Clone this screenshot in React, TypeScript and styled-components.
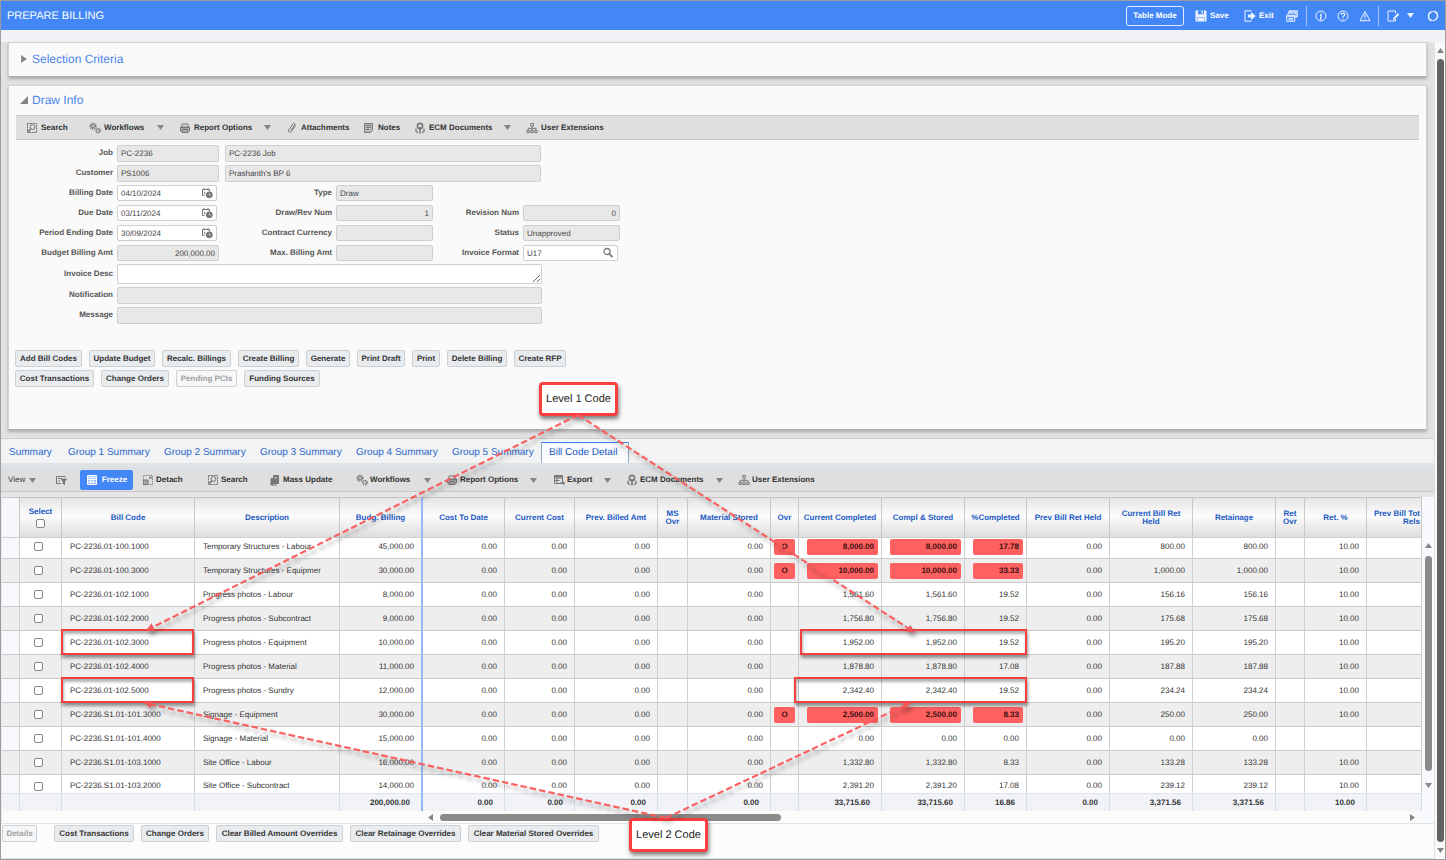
import React from 'react';
import styled, { createGlobalStyle, css } from 'styled-components';

const GlobalStyle = createGlobalStyle`
  *, *::before, *::after { box-sizing: border-box; }
  html, body { margin: 0; padding: 0; }
  body, button, input, textarea {
    font-family: "Liberation Sans", Arial, sans-serif;
    font-size: 8px;
    line-height: 10px;
    color: #333;
    text-rendering: geometricPrecision;
  }
  button { border: 0; margin: 0; padding: 0; background: none; cursor: pointer; }
`;

const Frame = styled.div`
  position: relative;
  display: flex;
  flex-direction: column;
  min-height: 100vh;
  border: 1px solid #9c9c9c;
  background: #fcfcfc;
  overflow: hidden;
`;

/* ---------- page header ---------- */

const Header = styled.header`
  display: flex;
  align-items: center;
  justify-content: space-between;
  height: 29px;
  padding: 0 6px;
  background: #4287f5;
  color: #fff;
`;

const PageTitle = styled.h1`
  margin: 0;
  font-size: 11px;
  line-height: 14px;
  font-weight: 400;
`;

const HeaderTools = styled.nav`
  display: grid;
  grid-template-columns: 69px 49px 42px 20px 9px 22px 22px 19px 9px 20px 20px 12px;
  align-items: center;
`;

const HeaderButton = styled.button`
  display: flex;
  align-items: center;
  justify-self: start;
  gap: 3px;
  color: #fff;
  font-weight: 700;
  svg { opacity: 0.9; }
`;

const OutlineButton = styled(HeaderButton)`
  justify-content: center;
  width: 58px;
  height: 20px;
  border: 1px solid #dfeaff;
  border-radius: 3px;
`;

const HeaderRule = styled.span`
  width: 1px;
  height: 20px;
  background: #a9c8fb;
`;

const SubHeader = styled.div`
  height: 12px;
  background: #f0f2f5;
`;

const Body = styled.div`
  display: flex;
  flex: 1;
`;

const Main = styled.main`
  display: flex;
  flex-direction: column;
  flex: 1;
  min-width: 0;
  border-right: 1px solid #dde3ea;
`;

/* ---------- upper panels ---------- */

const Upper = styled.div`
  display: flex;
  flex-direction: column;
  gap: 8px;
  padding: 0 7px 8px;
  background: #e2e2e2;
`;

const Panel = styled.section`
  background: #fafafa;
  border: 1px solid #d2d2d2;
  border-bottom-color: #b0b0b0;
  box-shadow: 0 2px 3px #aaa;
`;

const PanelTitle = styled.h2<{ $height: number }>`
  display: flex;
  align-items: center;
  gap: 4px;
  height: ${(p) => p.$height}px;
  margin: 0;
  padding: 0 0 2px 11px;
  font-size: 12px;
  line-height: 16px;
  font-weight: 400;
  color: #4b86ea;
`;

const Toolbar = styled.div<{ $inset?: boolean }>`
  display: flex;
  align-items: center;
  height: 25px;
  border-top: 1px solid #cbcbcb;
  border-bottom: 1px solid #c6c6c6;
  background: #dfdfdf;
  ${(p) => p.$inset && css`
    margin: 0 7px;
    padding-left: 10px;
    button { gap: 3px; }
  `}
`;

const LowerToolbar = styled(Toolbar)`
  height: 24px;
  padding-left: 7px;
  border-top-color: #d5dcf0;
`;

const ToolButton = styled.button<{ $width: number; $plain?: boolean }>`
  display: flex;
  align-items: center;
  gap: 2px;
  flex: none;
  width: ${(p) => p.$width}px;
  height: 20px;
  color: #333;
  font-weight: ${(p) => (p.$plain ? 400 : 700)};
  text-align: left;
  white-space: nowrap;
`;

const FreezeButton = styled.button`
  display: flex;
  align-items: center;
  justify-content: center;
  gap: 4px;
  flex: none;
  width: 53px;
  height: 20px;
  margin-right: 9px;
  border-radius: 2px;
  background: #4287f5;
  color: #fff;
  font-weight: 700;
`;

const CaretSlot = styled.span<{ $width: number }>`
  display: flex;
  width: ${(p) => p.$width}px;
`;

const Form = styled.form`
  display: flex;
  flex-direction: column;
  margin: 3px 7px 0;
`;

const FormRow = styled.div<{ $tall?: boolean; $area?: boolean }>`
  display: flex;
  align-items: center;
  height: ${(p) => (p.$area ? 22 : 20)}px;
  input { height: ${(p) => (p.$tall ? 17 : 16)}px; }
`;

const Label = styled.label<{ $width: number }>`
  flex: none;
  width: ${(p) => p.$width}px;
  padding-right: 4px;
  text-align: right;
  font-weight: 700;
  color: #555;
`;

const fieldLook = css`
  border: 1px solid #cfcfcf;
  border-radius: 2px;
  background: #fff;
  color: #444;
  outline: none;
`;

const Input = styled.input<{ $width: number; $end?: boolean }>`
  ${fieldLook}
  flex: none;
  width: ${(p) => p.$width}px;
  padding: 0 3px;
  text-align: ${(p) => (p.$end ? 'right' : 'left')};
  &:read-only { background: #e8e8e8; }
`;

const WideInput = styled(Input)`
  margin-left: 6px;
`;

const Area = styled.textarea`
  ${fieldLook}
  width: 425px;
  height: 20px;
  resize: vertical;
`;

const FieldWithIcon = styled.span<{ $width: number }>`
  ${fieldLook}
  display: flex;
  align-items: center;
  flex: none;
  width: ${(p) => p.$width}px;
  height: 16px;
  padding-right: 3px;
  input { flex: 1; min-width: 0; height: 14px; border: 0; }
`;

const Spacer = styled.span<{ $width: number }>`
  flex: none;
  width: ${(p) => p.$width}px;
`;

const ButtonRow = styled.div`
  display: flex;
  gap: 7px;
  margin-bottom: 3px;
`;

const Actions = styled.div`
  padding: 25px 6px 39px;
`;

const ActionButton = styled.button<{ $width: number }>`
  flex: none;
  width: ${(p) => p.$width}px;
  height: 17px;
  border: 1px solid #cdd1d4;
  border-radius: 2px;
  background: #e9ecef;
  color: #333;
  font-weight: 700;
  white-space: nowrap;
  &:disabled { background: #f6f7f8; color: #a0a0a0; cursor: default; }
`;

/* ---------- lower pane ---------- */

const TabBar = styled.div`
  display: flex;
  align-items: flex-end;
  height: 25px;
  border-top: 1px solid #cfcfcf;
  background: #f1f3f5;
`;

const Tab = styled.button<{ $width: number; $active?: boolean }>`
  flex: none;
  width: ${(p) => p.$width}px;
  height: 21px;
  padding-left: 8px;
  text-align: left;
  font-size: 10px;
  line-height: 12px;
  color: #2a66cc;
  white-space: nowrap;
  ${(p) =>
    p.$active &&
    css`
      padding-left: 7px;
      border: 1px solid #8fa9c4;
      border-top: 1px solid #4287f5;
      border-bottom: 0;
      background: #fafbfc;
      color: #1554c4;
    `}
`;

const TabStrip = styled.div`
  height: 5px;
  background: #dfe3e4;
`;

const GridArea = styled.div`
  display: flex;
  margin: 5px 0 0 1px;
  border-bottom: 1px solid #dde3ea;
`;

const GridColumn = styled.div`
  flex: 1;
  min-width: 0;
`;

const LowerPane = styled.div`
  background: #e6e6e6;
`;

const Grid = styled.table`
  width: 100%;
  table-layout: fixed;
  border-collapse: separate;
  border-spacing: 0;
  background: #fff;
`;

const HeadCell = styled.th<{ $freeze?: boolean; $blank?: boolean }>`
  height: 41px;
  padding: 0;
  overflow: hidden;
  border-top: 1px solid #c4c4c4;
  border-bottom: 1px solid #cfcfcf;
  border-right: ${(p) => (p.$freeze ? '2px solid #94b8f6' : '1px solid #c8c8c8')};
  background: ${(p) => (p.$blank ? '#f5f7fc' : 'linear-gradient(#e4e4e4, #fcfcfc 45%, #dedede)')};
  color: #2159c4;
  font-weight: 700;
  line-height: 8px;
  text-align: center;
`;

const HeadText = styled.span<{ $cut?: boolean }>`
  display: block;
  white-space: pre-line;
  ${(p) => p.$cut && css`padding-right: 1px; text-align: right;`}
`;

const HeadSelect = styled.label`
  display: flex;
  flex-direction: column;
  align-items: center;
  gap: 3px;
`;

const Check = styled.input`
  appearance: none;
  display: block;
  width: 9px;
  height: 9px;
  margin: 0;
  border: 1px solid #858585;
  border-radius: 2px;
  background: #fff;
`;

const Cell = styled.td<{ $freeze?: boolean; $end?: boolean }>`
  padding: 4px 7px 3px 8px;
  overflow: hidden;
  border-right: ${(p) => (p.$freeze ? '2px solid #94b8f6' : '1px solid #cfcfcf')};
  border-bottom: 1px solid #c9c9c9;
  line-height: 16px;
  text-align: ${(p) => (p.$end ? 'right' : 'left')};
  white-space: nowrap;
`;

const SelectCell = styled(Cell)`
  input { margin: 3px 6px 4px; }
`;

/* The first and last rows are cut by the edges of the scrolled area. */
const GridBody = styled.tbody`
  tr:nth-child(even) td { background: #eee; }
  tr:nth-child(odd) td:first-child { background: #f6f8fd; }
  tr:first-child td { padding-top: 1px; }
  tr:last-child td {
    padding-bottom: 0;
    border-bottom: 0;
    line-height: 14px;
  }
  tr:last-child input { margin-bottom: 2px; }
`;

const TotalCell = styled.td<{ $freeze?: boolean }>`
  height: 18px;
  padding: 0 11px 0 0;
  border-top: 1px solid #dfe4ea;
  border-right: ${(p) => (p.$freeze ? '2px solid #94b8f6' : '1px solid #d9dfe6')};
  background: #f1f3f8;
  font-weight: 700;
  text-align: right;
`;

const Flag = styled.span<{ $small?: boolean }>`
  display: block;
  margin: ${(p) => (p.$small ? '0 -4px 0 -5px' : '0 -4px 0 0')};
  padding-right: ${(p) => (p.$small ? 0 : 4)}px;
  border-radius: 2px;
  background: #ff6060;
  color: #3a1010;
  font-weight: 700;
  text-align: ${(p) => (p.$small ? 'center' : 'right')};
`;

const HorizontalBar = styled.div`
  display: flex;
  align-items: center;
  height: 12px;
  padding: 0 6px 0 425px;
  background: #fbfbfc;
`;

const HorizontalTrack = styled.div`
  flex: 1;
  margin: 0 21px 0 6px;
`;

const HorizontalThumb = styled.div`
  width: 36%;
  height: 7px;
  border-radius: 4px;
  background: #8a8a8a;
`;

const VerticalBar = styled.div<{ $grid?: boolean }>`
  display: flex;
  flex-direction: column;
  align-items: center;
  flex: none;
  width: ${(p) => (p.$grid ? 12 : 10)}px;
  padding: ${(p) => (p.$grid ? '45px 0 34px' : '5px 0')};
  background: ${(p) => (p.$grid ? '#f8f9fc' : '#f9f9f9')};
`;

const VerticalThumb = styled.div<{ $grid?: boolean }>`
  flex: 1;
  width: 7px;
  margin: ${(p) => (p.$grid ? '7px 0 11px' : '5px 0')};
  border-radius: 4px;
  background: ${(p) => (p.$grid ? '#8a8a8a' : '#626262')};
`;

const FooterButtons = styled.div`
  display: flex;
  gap: 7px;
  flex: 1;
  padding: 1px 0 0 1px;
  background: #fcfcfc;
  border-bottom: 1px solid #dde3ea;
`;

/* ---------- call-outs over the page ---------- */

const Overlay = styled.div`
  position: absolute;
  inset: 0;
  pointer-events: none;
`;

const Arrows = styled.svg`
  position: absolute;
  top: 0;
  left: 0;
  filter: drop-shadow(2px 4px 2px rgba(0, 0, 0, 0.35));
`;

const CallOut = styled.div<{ $x: number; $y: number }>`
  position: absolute;
  left: ${(p) => p.$x}px;
  top: ${(p) => p.$y}px;
  display: flex;
  align-items: center;
  justify-content: center;
  width: 79px;
  height: 34px;
  border: 3px solid #f94040;
  border-radius: 4px;
  background: #fff;
  box-shadow: 1px 3px 4px rgba(0, 0, 0, 0.5);
  color: #222;
  font-size: 11px;
  line-height: 14px;
  white-space: nowrap;
`;

const Marker = styled.div<{ $x: number; $y: number; $width: number }>`
  position: absolute;
  left: ${(p) => p.$x}px;
  top: ${(p) => p.$y}px;
  width: ${(p) => p.$width}px;
  height: 26px;
  border: 2px solid #f44040;
  box-shadow: 1px 3px 3px rgba(0, 0, 0, 0.4), inset 1px 3px 3px rgba(0, 0, 0, 0.3);
`;

/* ---------- icons ---------- */

const glyphs: Record<string, React.ReactNode> = {
  search: (
    <>
      <path d="M1.5 1.5h9v9h-9z" strokeDasharray="2 .6" />
      <circle cx="6.5" cy="5" r="2.4" />
      <path d="M4.8 6.8L2 10" strokeWidth="1.6" />
    </>
  ),
  gears: (
    <>
      <circle cx="4" cy="4.2" r="2.8" strokeDasharray="1.3 .7" strokeWidth="1.6" />
      <circle cx="4" cy="4.2" r="1.5" />
      <circle cx="9" cy="8.6" r="1.9" strokeDasharray="1.1 .5" strokeWidth="1.8" />
    </>
  ),
  printer: (
    <>
      <path d="M3 5V2h6v3M1.5 5h9v4h-9zM3 7.5h6v3H3z" />
      <path d="M2 5.8h8" strokeWidth="1.5" />
    </>
  ),
  clip: <path d="M9.5 3.5L5.3 9.6a1.5 1.5 0 01-2.5-1.7L7 1.8a1 1 0 011.8 1.1L5 8.4" />,
  notes: (
    <>
      <path d="M1.5 1.5h8v7l-2 2h-6z" fill="#bbb" />
      <path d="M3 3.5h5M3 5.5h5M3 7.5h3" />
    </>
  ),
  ecm: (
    <>
      <circle cx="6" cy="4" r="2.6" strokeWidth="1.6" />
      <path d="M6 5v6.500" strokeWidth="1.600" />
      <path d="M2 6.500v3l2 1.200M10 6.500v3l-2 1.200" strokeWidth="1.300" />
    </>
  ),
  org: (
    <>
      <path d="M4.8 1.5h2.6v2.6H4.8zM1 8.4h2.4v2.2H1zM4.9 8.4h2.4v2.2H4.9zM8.8 8.4h2.4v2.2H8.8z" />
      <path d="M6.1 4.2v4M2.2 8.2V6.3h7.8v1.9" />
    </>
  ),
  query: (
    <>
      <path d="M6 9.5H1.500V2.500h9M3 4.500h3M3 7h2" />
      <path d="M6 5h5.500L9.600 7.300V10.500L8 9.500V7.300z" fill="currentColor" />
    </>
  ),
  freeze: (
    <>
      <path d="M1.500 1.500h9v9h-9z" fill="#8fb7fa" />
      <path d="M2 3.300h8M4.300 3v7M7 3v7M2 5.500h8M2 8h8" />
    </>
  ),
  detach: (
    <>
      <path d="M1.500 1.500h9v9h-9z" strokeDasharray="1.400 1" />
      <path d="M1.500 6h4.500v4.500H1.500z" fill="#aaa" />
      <path d="M7 5l2-2M7.200 3h2v2" />
    </>
  ),
  mass: (
    <>
      <path d="M4.500 1.500h5v8h-5z" fill="currentColor" />
      <path d="M2 4.500h1.500v6.500H2zM3 11h5" fill="currentColor" />
      <path d="M5.500 3.500h1.500v1.500" stroke="#ddd" strokeWidth=".8" />
    </>
  ),
  exportTable: (
    <>
      <path d="M1.500 1.500h8v8h-8zM1.500 4h8M1.500 6.500h5M4 4v5.500" />
      <path d="M1.500 2.500h8" strokeWidth="1.600" />
      <path d="M7 8.500h3v-1.500l2 2.300-2 2.200v-1.500H7z" fill="currentColor" stroke="none" />
    </>
  ),
  calendar: (
    <>
      <path d="M1.500 8.500V2.500h7v1.500M3 .8v2.500M7 .8v2.500M1.500 8.500h2M3.700 4.800v2.500" />
      <circle cx="8.300" cy="7.800" r="3" fill="currentColor" />
      <path d="M8.300 6.300v1.700h1.400" stroke="#eee" strokeWidth=".7" />
    </>
  ),
  magnifier: (
    <>
      <circle cx="5" cy="4.500" r="3" strokeWidth="1.300" />
      <path d="M7.300 6.800l3.200 3.400" strokeWidth="1.700" />
    </>
  ),
  save: (
    <>
      <path d="M.5 .5h10l1 1v10H.5z" fill="currentColor" stroke="none" />
      <path d="M3 .5h6v3.800H3zM2.500 7h7v4h-7z" fill="#4287f5" stroke="none" />
      <path d="M6.500 1h1.500v2.500H6.500zM3 7.500h6v3.500H3z" fill="currentColor" stroke="none" />
    </>
  ),
  exit: (
    <>
      <path d="M7 1.500V.8H1v10.400h6v-.8" />
      <path d="M4 4.500h3V2l4.800 4L7 10V7.500H4z" fill="currentColor" stroke="none" />
    </>
  ),
  windows: (
    <>
      <path d="M3 3V.9h8.300v6H9.500M3 1.900h8" />
      <path d="M.7 5.300h8v6h-8zM.7 6.300h8M2.500 8.300h4.500M2.500 9.800h4.500" />
      <path d="M2 4.500V3h8v5" />
    </>
  ),
  info: (
    <>
      <circle cx="6" cy="6" r="5" />
      <path d="M6.300 5L5.600 9h1M5 5h1.300M6.500 2.700v1" strokeWidth="1.300" />
    </>
  ),
  help: (
    <>
      <circle cx="6" cy="6" r="5" />
      <path d="M4.300 4.800c0-2.200 3.400-2.200 3.400 0 0 1.200-1.700 1.200-1.700 2.400M6 8.200v1" strokeWidth="1.300" />
    </>
  ),
  warn: (
    <>
      <path d="M6 1.500l5 9.200H1z" />
      <path d="M6 4.500v3.300M6 8.600v1" strokeWidth="1.200" />
    </>
  ),
  edit: (
    <>
      <path d="M8.500 3.500V1H1v10h5.500M8.500 9v2H6" />
      <path d="M11.800 3.800L7 8.600" strokeWidth="2" />
      <path d="M6.800 7.600l1.400 1.400-2.400 1.200z" fill="currentColor" stroke="none" />
    </>
  ),
  refresh: (
    <>
      <path d="M3.200 9.700A4.600 4.600 0 014.500 1.700M8.800 2.300A4.600 4.600 0 017.500 10.300" strokeWidth="1.500" />
      <path d="M4.500 1.600A4.600 4.600 0 018.500 2M7.500 10.400a4.600 4.600 0 01-4-.4" strokeWidth="1" />
      <path d="M1 9.300h3.300v2.200zM11 2.700H7.700V.5z" fill="currentColor" stroke="none" />
    </>
  ),
};

const Svg = styled.svg`
  flex: none;
  display: block;
`;

function Icon({ name, color = '#777' }: { name: string; color?: string }) {
  return (
    <Svg width="12" height="12" viewBox="0 0 12 12" fill="none" stroke="currentColor" color={color} strokeWidth="1" aria-hidden="true">
      {glyphs[name]}
    </Svg>
  );
}

type Direction = 'down' | 'up' | 'left' | 'right' | 'corner';

const arrowShapes: Record<Direction, string> = {
  down: '0,1 7,1 3.5,6',
  up: '0,6 7,6 3.5,1',
  left: '6,0 6,7 1,3.5',
  right: '1,0 1,7 6,3.5',
  corner: '0,7 7,0 7,7',
};

function Arrow({ direction, color = '#858585', size = 7 }: { direction: Direction; color?: string; size?: number }) {
  return (
    <Svg width={size} height={size} viewBox="0 0 7 7" aria-hidden="true">
      <polygon points={arrowShapes[direction]} fill={color} />
    </Svg>
  );
}

/* ---------- data ---------- */

type Tool = { icon: string; text: string; width: number; caret?: number };

const upperTools: Tool[] = [
  { icon: 'search', text: 'Search', width: 63 },
  { icon: 'gears', text: 'Workflows', width: 68, caret: 22 },
  { icon: 'printer', text: 'Report Options', width: 85, caret: 22 },
  { icon: 'clip', text: 'Attachments', width: 77 },
  { icon: 'notes', text: 'Notes', width: 51 },
  { icon: 'ecm', text: 'ECM Documents', width: 90, caret: 22 },
  { icon: 'org', text: 'User Extensions', width: 90 },
];

const lowerTools: Tool[] = [
  { icon: 'detach', text: 'Detach', width: 65 },
  { icon: 'search', text: 'Search', width: 62 },
  { icon: 'mass', text: 'Mass Update', width: 87 },
  { icon: 'gears', text: 'Workflows', width: 68, caret: 22 },
  { icon: 'printer', text: 'Report Options', width: 84, caret: 23 },
  { icon: 'exportTable', text: 'Export', width: 51, caret: 22 },
  { icon: 'ecm', text: 'ECM Documents', width: 90, caret: 22 },
  { icon: 'org', text: 'User Extensions', width: 90 },
];

type Action = [text: string, width: number, disabled?: boolean];

const firstActions: Action[] = [
  ['Add Bill Codes', 67], ['Update Budget', 66], ['Recalc. Billings', 69], ['Create Billing', 61],
  ['Generate', 44], ['Print Draft', 48], ['Print', 28], ['Delete Billing', 60], ['Create RFP', 52],
];
const secondActions: Action[] = [
  ['Cost Transactions', 79], ['Change Orders', 68], ['Pending PCIs', 61, true], ['Funding Sources', 76],
];
const footerActions: Action[] = [
  ['Cost Transactions', 80], ['Change Orders', 68], ['Clear Billed Amount Overrides', 127],
  ['Clear Retainage Overrides', 111], ['Clear Material Stored Overrides', 131],
];

const tabs: [string, number][] = [
  ['Summary', 59], ['Group 1 Summary', 96], ['Group 2 Summary', 96], ['Group 3 Summary', 96],
  ['Group 4 Summary', 96], ['Group 5 Summary', 97], ['Bill Code Detail', 88],
];

const columnWidths = [18, 42, 133, 145, 83, 82, 70, 83, 30, 83, 28, 83, 83, 62, 83, 83, 83, 29, 62];

const headings = [
  'Bill Code', 'Description', 'Budg. Billing', 'Cost To Date', 'Current Cost', 'Prev. Billed Amt', 'MS\nOvr',
  'Material Stored', 'Ovr', 'Current Completed', 'Compl & Stored', '%Completed', 'Prev Bill Ret Held',
  'Current Bill Ret\nHeld', 'Retainage', 'Ret\nOvr', 'Ret. %', 'Prev Bill Tot\nRels',
];

type Row = {
  code: string; description: string; budget: string; completed: string;
  percent: string; retained: string; rate: string; override?: boolean;
};

const row = (
  code: string, description: string, budget: string, completed: string,
  percent: string, retained: string, rate = '10.00', override = false,
): Row => ({ code, description, budget, completed, percent, retained, rate, override });

const rows: Row[] = [
  row('PC-2236.01-100.1000', 'Temporary Structures - Labour', '45,000.00', '8,000.00', '17.78', '800.00', '10.00', true),
  row('PC-2236.01-100.3000', 'Temporary Structures - Equipmer', '30,000.00', '10,000.00', '33.33', '1,000.00', '10.00', true),
  row('PC-2236.01-102.1000', 'Progress photos - Labour', '8,000.00', '1,561.60', '19.52', '156.16'),
  row('PC-2236.01-102.2000', 'Progress photos - Subcontract', '9,000.00', '1,756.80', '19.52', '175.68'),
  row('PC-2236.01-102.3000', 'Progress photos - Equipment', '10,000.00', '1,952.00', '19.52', '195.20'),
  row('PC-2236.01-102.4000', 'Progress photos - Material', '11,000.00', '1,878.80', '17.08', '187.88'),
  row('PC-2236.01-102.5000', 'Progress photos - Sundry', '12,000.00', '2,342.40', '19.52', '234.24'),
  row('PC-2236.S1.01-101.3000', 'Signage - Equipment', '30,000.00', '2,500.00', '8.33', '250.00', '10.00', true),
  row('PC-2236.S1.01-101.4000', 'Signage - Material', '15,000.00', '0.00', '0.00', '0.00', ''),
  row('PC-2236.S1.01-103.1000', 'Site Office - Labour', '16,000.00', '1,332.80', '8.33', '133.28'),
  row('PC-2236.S1.01-103.2000', 'Site Office - Subcontract', '14,000.00', '2,391.20', '17.08', '239.12'),
];

const totals = [
  '', '', '', '', '200,000.00', '0.00', '0.00', '0.00', '', '0.00', '', '33,715.60', '33,715.60', '16.86',
  '0.00', '3,371.56', '3,371.56', '', '10.00', '',
];

const arrowPaths: [number, number, number, number][] = [
  [577, 414, 146, 629],
  [577, 414, 913, 631],
  [665, 817, 144, 702],
  [665, 817, 909, 702],
];

/* ---------- parts ---------- */

function Tools({ items }: { items: Tool[] }) {
  return (
    <>
      {items.map((t) => (
        <React.Fragment key={t.text}>
          <ToolButton type="button" $width={t.width}>
            <Icon name={t.icon} />
            {t.text}
          </ToolButton>
          {t.caret && (
            <CaretSlot $width={t.caret}>
              <Arrow direction="down" />
            </CaretSlot>
          )}
        </React.Fragment>
      ))}
    </>
  );
}

function ActionButtons({ items }: { items: Action[] }) {
  return (
    <>
      {items.map(([text, width, disabled]) => (
        <ActionButton key={text} type="button" $width={width} disabled={disabled}>
          {text}
        </ActionButton>
      ))}
    </>
  );
}

type FieldProps = { id: string; label: string; labelWidth: number; width: number; value?: string; end?: boolean };

function ReadField({ id, label, labelWidth, width, value = '', end }: FieldProps) {
  return (
    <>
      <Label htmlFor={id} $width={labelWidth}>{label}</Label>
      <Input id={id} $width={width} $end={end} value={value} readOnly />
    </>
  );
}

function EditField({ id, label, labelWidth, width, value, icon }: FieldProps & { icon: string }) {
  return (
    <>
      <Label htmlFor={id} $width={labelWidth}>{label}</Label>
      <FieldWithIcon $width={width}>
        <Input id={id} $width={width - 18} defaultValue={value} />
        <Icon name={icon} />
      </FieldWithIcon>
    </>
  );
}

function DrawForm() {
  return (
    <Form>
      <FormRow $tall>
        <ReadField id="job" label="Job" labelWidth={101} width={102} value="PC-2236" />
        <WideInput $width={316} value="PC-2236 Job" aria-label="Job name" readOnly />
      </FormRow>
      <FormRow $tall>
        <ReadField id="customer" label="Customer" labelWidth={101} width={102} value="PS1006" />
        <WideInput $width={316} value="Prashanth's BP 6" aria-label="Customer name" readOnly />
      </FormRow>
      <FormRow>
        <EditField id="billing-date" label="Billing Date" labelWidth={101} width={100} value="04/10/2024" icon="calendar" />
        <Spacer $width={2} />
        <ReadField id="type" label="Type" labelWidth={117} width={97} value="Draw" />
      </FormRow>
      <FormRow>
        <EditField id="due-date" label="Due Date" labelWidth={101} width={100} value="03/11/2024" icon="calendar" />
        <Spacer $width={2} />
        <ReadField id="draw-num" label="Draw/Rev Num" labelWidth={117} width={97} value="1" end />
        <ReadField id="revision" label="Revision Num" labelWidth={90} width={97} value="0" end />
      </FormRow>
      <FormRow>
        <EditField id="period" label="Period Ending Date" labelWidth={101} width={100} value="30/09/2024" icon="calendar" />
        <Spacer $width={2} />
        <ReadField id="currency" label="Contract Currency" labelWidth={117} width={97} />
        <ReadField id="status" label="Status" labelWidth={90} width={97} value="Unapproved" />
      </FormRow>
      <FormRow>
        <ReadField id="budget" label="Budget Billing Amt" labelWidth={101} width={102} value="200,000.00" end />
        <ReadField id="max-billing" label="Max. Billing Amt" labelWidth={117} width={97} />
        <EditField id="format" label="Invoice Format" labelWidth={90} width={95} value="U17" icon="magnifier" />
      </FormRow>
      <FormRow $area>
        <Label htmlFor="desc" $width={101}>Invoice Desc</Label>
        <Area id="desc" />
      </FormRow>
      <FormRow $tall>
        <ReadField id="notification" label="Notification" labelWidth={101} width={425} />
      </FormRow>
      <FormRow $tall>
        <ReadField id="message" label="Message" labelWidth={101} width={425} />
      </FormRow>
    </Form>
  );
}

function Amount({ value, flagged }: { value: string; flagged?: boolean }) {
  return <Cell $end>{flagged ? <Flag>{value}</Flag> : value}</Cell>;
}

function BillGrid() {
  return (
    <Grid>
      <colgroup>
        {columnWidths.map((w, i) => <col key={i} width={w} />)}
        <col />
      </colgroup>
      <thead>
        <tr>
          <HeadCell $blank />
          <HeadCell>
            <HeadSelect>
              Select
              <Check type="checkbox" />
            </HeadSelect>
          </HeadCell>
          {headings.map((h, i) => (
            <HeadCell key={h} $freeze={i === 2} scope="col">
              <HeadText $cut={i === headings.length - 1}>{h}</HeadText>
            </HeadCell>
          ))}
        </tr>
      </thead>
      <GridBody>
        {rows.map((r) => (
          <tr key={r.code}>
            <Cell />
            <SelectCell><Check type="checkbox" aria-label={`Select ${r.code}`} /></SelectCell>
            <Cell>{r.code}</Cell>
            <Cell>{r.description}</Cell>
            <Cell $end $freeze>{r.budget}</Cell>
            <Cell $end>0.00</Cell>
            <Cell $end>0.00</Cell>
            <Cell $end>0.00</Cell>
            <Cell />
            <Cell $end>0.00</Cell>
            <Cell>{r.override && <Flag $small>O</Flag>}</Cell>
            <Amount value={r.completed} flagged={r.override} />
            <Amount value={r.completed} flagged={r.override} />
            <Amount value={r.percent} flagged={r.override} />
            <Cell $end>0.00</Cell>
            <Cell $end>{r.retained}</Cell>
            <Cell $end>{r.retained}</Cell>
            <Cell />
            <Cell $end>{r.rate}</Cell>
            <Cell />
          </tr>
        ))}
      </GridBody>
      <tfoot>
        <tr>
          {totals.map((t, i) => <TotalCell key={i} $freeze={i === 4}>{t}</TotalCell>)}
        </tr>
      </tfoot>
    </Grid>
  );
}

function Annotations() {
  return (
    <Overlay>
      <Marker $x={60} $y={628} $width={133} />
      <Marker $x={60} $y={676} $width={133} />
      <Marker $x={799} $y={628} $width={227} />
      <Marker $x={793} $y={676} $width={233} />
      <CallOut $x={538} $y={381}>Level 1 Code</CallOut>
      <CallOut $x={628} $y={817}>Level 2 Code</CallOut>
      <Arrows width="1444" height="858" aria-hidden="true">
        <defs>
          <marker id="head" viewBox="0 0 8 8" refX="7" refY="4" markerWidth="8" markerHeight="8" markerUnits="userSpaceOnUse" orient="auto">
            <path d="M0 0L8 4L0 8z" fill="#f55555" />
          </marker>
        </defs>
        {arrowPaths.map(([x1, y1, x2, y2]) => (
          <line
            key={`${x2}-${y2}`} x1={x1} y1={y1} x2={x2} y2={y2}
            stroke="#fa5a5a" strokeWidth="2.2" strokeDasharray="6.500 3" opacity="0.95" markerEnd="url(#head)"
          />
        ))}
      </Arrows>
    </Overlay>
  );
}

export default function App() {
  return (
    <Frame>
      <GlobalStyle />
      <Header>
        <PageTitle>PREPARE BILLING</PageTitle>
        <HeaderTools>
          <OutlineButton type="button">Table Mode</OutlineButton>
          <HeaderButton type="button"><Icon name="save" color="#fff" />Save</HeaderButton>
          <HeaderButton type="button"><Icon name="exit" color="#fff" />Exit</HeaderButton>
          <HeaderButton type="button" aria-label="Windows"><Icon name="windows" color="#fff" /></HeaderButton>
          <HeaderRule />
          <HeaderButton type="button" aria-label="Information"><Icon name="info" color="#fff" /></HeaderButton>
          <HeaderButton type="button" aria-label="Help"><Icon name="help" color="#fff" /></HeaderButton>
          <HeaderButton type="button" aria-label="Warnings"><Icon name="warn" color="#fff" /></HeaderButton>
          <HeaderRule />
          <HeaderButton type="button" aria-label="Edit"><Icon name="edit" color="#fff" /></HeaderButton>
          <HeaderButton type="button" aria-label="More"><Arrow direction="down" color="#fff" /></HeaderButton>
          <HeaderButton type="button" aria-label="Refresh"><Icon name="refresh" color="#fff" /></HeaderButton>
        </HeaderTools>
      </Header>
      <SubHeader />
      <Body>
        <Main>
          <Upper>
            <Panel>
              <PanelTitle $height={33}><Arrow direction="right" size={8} />Selection Criteria</PanelTitle>
            </Panel>
            <Panel>
              <PanelTitle $height={29}><Arrow direction="corner" size={8} />Draw Info</PanelTitle>
              <Toolbar $inset><Tools items={upperTools} /></Toolbar>
              <DrawForm />
              <Actions>
                <ButtonRow><ActionButtons items={firstActions} /></ButtonRow>
                <ButtonRow><ActionButtons items={secondActions} /></ButtonRow>
              </Actions>
            </Panel>
          </Upper>
          <LowerPane>
            <TabBar role="tablist">
              {tabs.map(([text, width], i) => (
                <Tab key={text} type="button" role="tab" aria-selected={i === 6} $width={width} $active={i === 6}>
                  {text}
                </Tab>
              ))}
            </TabBar>
            <TabStrip />
            <LowerToolbar>
              <ToolButton type="button" $plain $width={47}>View&nbsp;<Arrow direction="down" /></ToolButton>
              <ToolButton type="button" $width={25} aria-label="Query by example"><Icon name="query" /></ToolButton>
              <FreezeButton type="button"><Icon name="freeze" color="#fff" />Freeze</FreezeButton>
              <Tools items={lowerTools} />
            </LowerToolbar>
            <GridArea>
              <GridColumn>
                <BillGrid />
                <HorizontalBar>
                  <Arrow direction="left" />
                  <HorizontalTrack><HorizontalThumb /></HorizontalTrack>
                  <Arrow direction="right" />
                </HorizontalBar>
              </GridColumn>
              <VerticalBar $grid>
                <Arrow direction="up" />
                <VerticalThumb $grid />
                <Arrow direction="down" />
              </VerticalBar>
            </GridArea>
          </LowerPane>
          <FooterButtons>
            <ActionButton type="button" $width={35} disabled>Details</ActionButton>
            <Spacer $width={3} />
            <ActionButtons items={footerActions} />
          </FooterButtons>
        </Main>
        <VerticalBar>
          <Arrow direction="up" />
          <VerticalThumb />
          <Arrow direction="down" />
        </VerticalBar>
      </Body>
      <Annotations />
    </Frame>
  );
}
